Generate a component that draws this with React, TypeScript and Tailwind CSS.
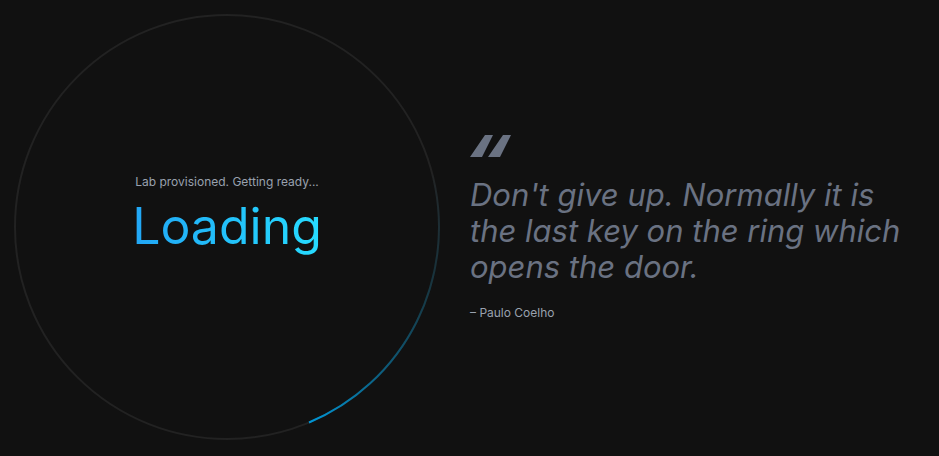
function ProgressRing() {
  return (
    <svg viewBox="0 0 426 426" className="col-start-1 row-start-1 w-full" fill="none" aria-hidden="true">
      <defs>
        <linearGradient id="arc" gradientUnits="userSpaceOnUse" x1="424" y1="160" x2="295" y2="408">
          <stop offset="0" stopColor="#0096d6" stopOpacity="0" />
          <stop offset="0.3" stopColor="#005f80" stopOpacity="0.25" />
          <stop offset="0.7" stopColor="#0080b3" stopOpacity="0.6" />
          <stop offset="1" stopColor="#0096d6" />
        </linearGradient>
      </defs>
      <circle cx="213" cy="213" r="212" stroke="#222222" strokeWidth="2" />
      <path d="M418.4 160.5A212 212 0 0 1 295 408.5" stroke="url(#arc)" strokeWidth="2" />
    </svg>
  );
}

function Quote() {
  return (
    <figure className="pt-0.5 pr-4">
      <svg viewBox="0 0 41 22" className="h-[22px] w-[41px] fill-gray-500" aria-hidden="true">
        <path d="M15 0h8L12 22H0zM33 0h8L30 22H18z" />
      </svg>
      <blockquote className="mt-5 text-[31px] leading-9 text-gray-500 italic">
        Don't give up. Normally it is the last key on the ring which opens the door.
      </blockquote>
      <figcaption className="mt-5 text-xs leading-4 text-gray-400">– Paulo Coelho</figcaption>
    </figure>
  );
}

export default function App() {
  return (
    <main className="grid min-h-screen grid-cols-[minmax(0,426fr)_minmax(0,455fr)] content-start items-center gap-x-[30px] bg-[#111111] p-3.5 font-['Inter',sans-serif]">
      <section className="grid items-center" role="status">
        <ProgressRing />
        <div className="col-start-1 row-start-1 pb-[22px] text-center">
          <p className="text-xs leading-4 text-gray-400">Lab provisioned. Getting ready...</p>
          <h1 className="mx-auto mt-1 w-fit bg-linear-to-r from-[#22a6f5] to-[#27dcff] bg-clip-text text-[50px] leading-16 text-transparent">
            Loading
          </h1>
        </div>
      </section>
      <Quote />
    </main>
  );
}
